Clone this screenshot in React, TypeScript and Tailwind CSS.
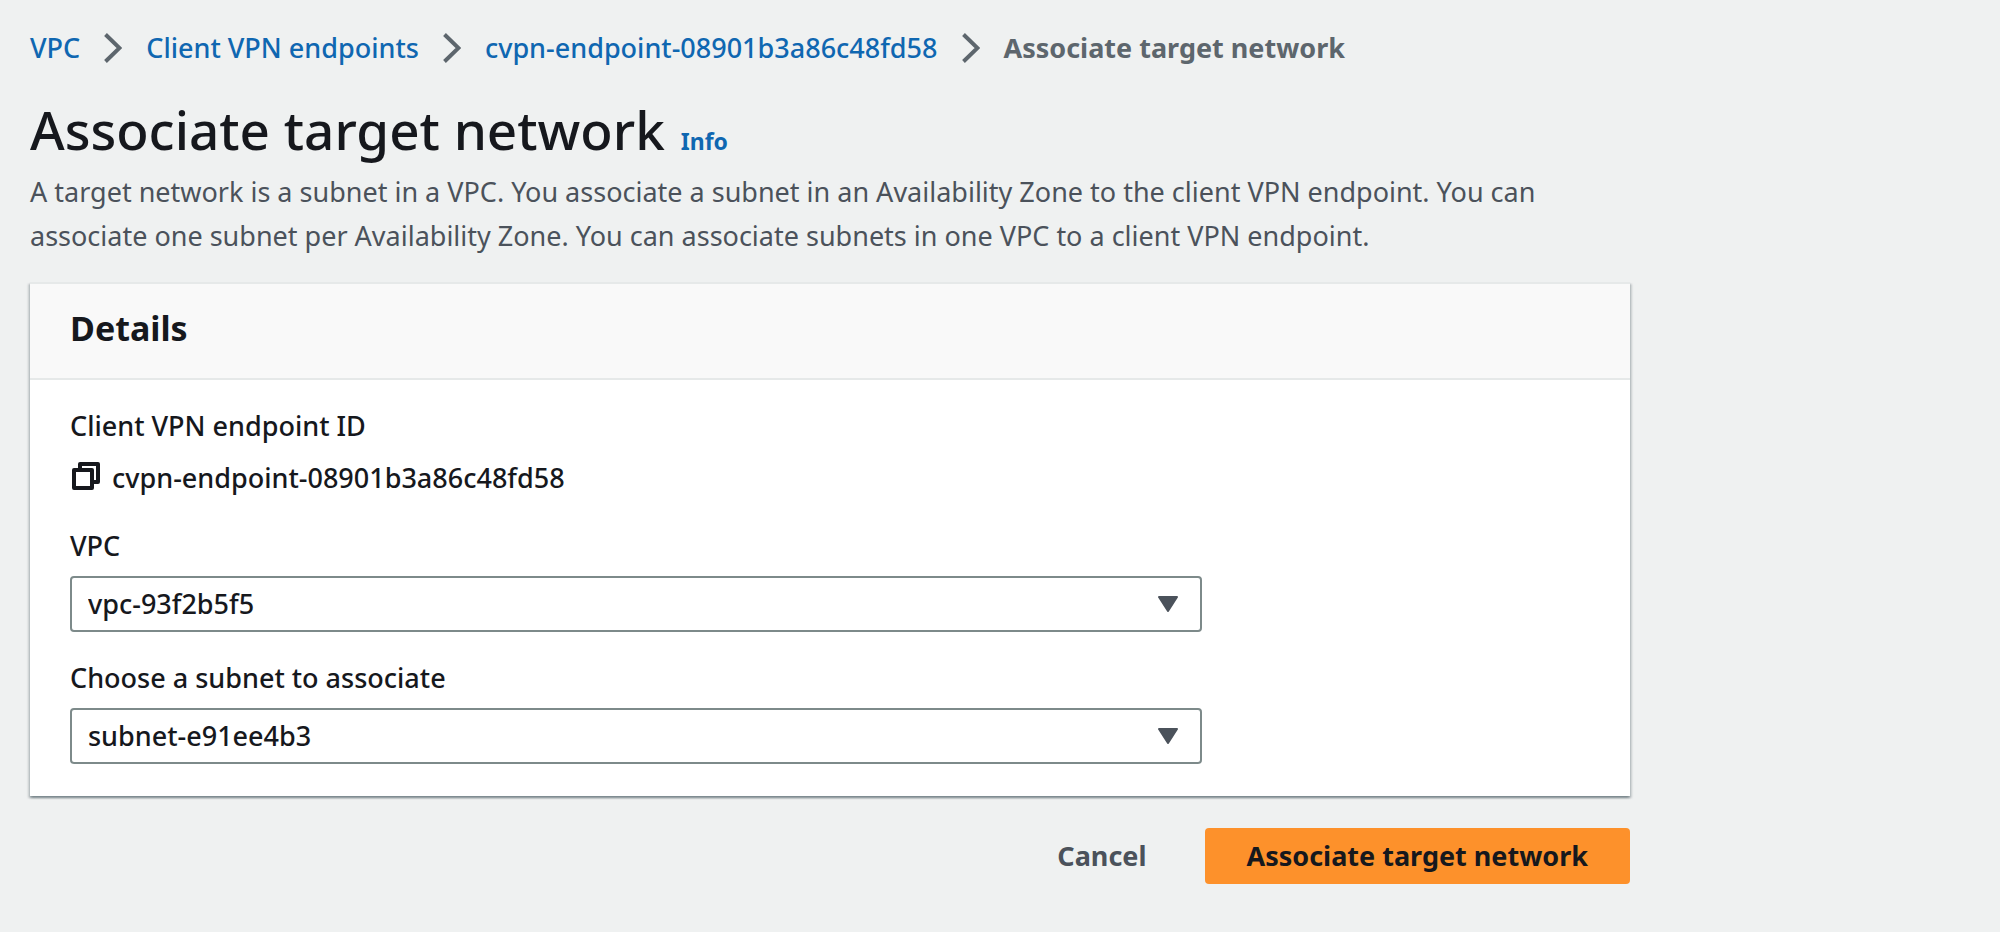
import type { ReactNode } from "react"

const endpointId = "cvpn-endpoint-08901b3a86c48fd58"

function ChevronIcon() {
  return (
    <svg aria-hidden="true" viewBox="0 0 18 30" className="h-[30px] w-[18px] shrink-0 text-[#5d666d]">
      <path d="M1.5 1.5 15.5 15 1.5 28.5" fill="none" stroke="currentColor" strokeWidth="4" />
    </svg>
  )
}

function CopyIcon() {
  return (
    <svg
      aria-hidden="true"
      viewBox="0 0 28 28"
      className="size-7"
      fill="none"
      stroke="currentColor"
      strokeWidth="4"
      strokeLinejoin="round"
    >
      <path d="M8 6V2h18v18h-4" />
      <path d="M2 8h18v18H2z" />
    </svg>
  )
}

function Crumb({ children }: { children: ReactNode }) {
  return (
    <li className="flex items-center gap-6">
      <a href="#" className="text-[#0f67b1] hover:underline">
        {children}
      </a>
      <ChevronIcon />
    </li>
  )
}

function SelectField({ id, label, value }: { id: string; label: string; value: string }) {
  return (
    <div className="mt-6">
      <label htmlFor={id} className="block">
        {label}
      </label>
      <div className="relative mt-2">
        <select
          id={id}
          defaultValue={value}
          className="block h-14 w-full appearance-none rounded-sm border-2 border-[#7d8a8a] bg-white pr-16 pl-4"
        >
          <option value={value}>{value}</option>
        </select>
        <svg
          aria-hidden="true"
          viewBox="0 0 20 16"
          className="pointer-events-none absolute top-5 right-6 h-4 w-5 text-[#4b525b]"
        >
          <path
            d="M1 1h18L10 15z"
            fill="currentColor"
            stroke="currentColor"
            strokeWidth="2"
            strokeLinejoin="round"
          />
        </svg>
      </div>
    </div>
  )
}

export default function App() {
  return (
    <main className="min-h-screen bg-[#eff1f1] px-[30px] pt-[26px] pb-12 font-['Noto_Sans',sans-serif] text-[27px] leading-[44px] font-medium text-[#16181d]">
      <div className="max-w-[1600px]">
        <nav aria-label="Breadcrumbs">
          <ol className="flex flex-wrap items-center gap-x-6">
            <Crumb>VPC</Crumb>
            <Crumb>Client VPN endpoints</Crumb>
            <Crumb>{endpointId}</Crumb>
            <li aria-current="page" className="font-bold text-[#5d666d]">
              Associate target network
            </li>
          </ol>
        </nav>

        <div className="mt-5 flex flex-wrap items-baseline gap-x-4">
          <h1 className="text-[53px] leading-[80px] font-medium">Associate target network</h1>
          <a href="#" className="text-[23px] font-bold text-[#0f67b1] hover:underline">
            Info
          </a>
        </div>
        <p className="max-w-[1560px] font-normal text-[#4b525b]">
          A target network is a subnet in a VPC. You associate a subnet in an Availability Zone to the
          client VPN endpoint. You can associate one subnet per Availability Zone. You can associate
          subnets in one VPC to a client VPN endpoint.
        </p>

        <form onSubmit={(e) => e.preventDefault()}>
          <section className="mt-6 border-t-2 border-[#e6e9e9] bg-white shadow-[0_2px_2px_0_#001c244d,2px_2px_2px_0_#001c2426,-2px_2px_2px_0_#001c2426]">
            <header className="border-b-2 border-[#e6e9e9] bg-[#f9f9f9] px-10 pt-[22px] pb-7">
              <h2 className="text-[34px] font-bold">Details</h2>
            </header>
            <div className="px-10 pt-6 pb-8">
              <div className="max-w-[1132px]">
                <div>Client VPN endpoint ID</div>
                <div className="mt-2 flex items-center gap-3">
                  <button type="button" aria-label="Copy endpoint ID" className="pb-1 pl-0.5">
                    <CopyIcon />
                  </button>
                  <span>{endpointId}</span>
                </div>
                <SelectField id="vpc" label="VPC" value="vpc-93f2b5f5" />
                <SelectField
                  id="subnet"
                  label="Choose a subnet to associate"
                  value="subnet-e91ee4b3"
                />
              </div>
            </div>
          </section>

          <div className="mt-8 flex justify-end gap-4 font-bold">
            <button type="button" className="h-14 px-[42px] text-[#4b525b]">
              Cancel
            </button>
            <button type="submit" className="h-14 rounded-sm bg-[#fd912b] px-[42px]">
              Associate target network
            </button>
          </div>
        </form>
      </div>
    </main>
  )
}
